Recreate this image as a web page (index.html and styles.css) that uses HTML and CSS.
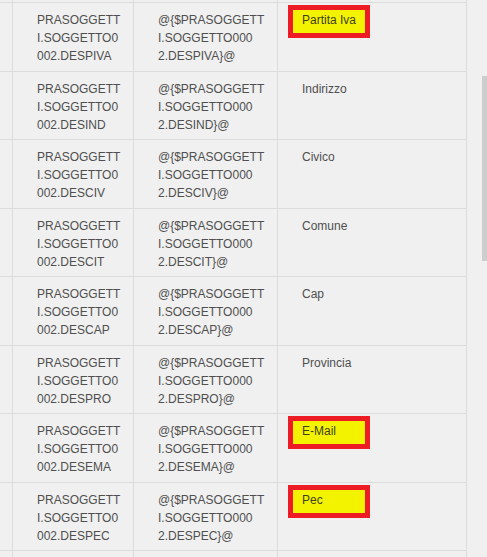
FILE: index.html
```html
<!DOCTYPE html>
<html lang="it">
<head>
  <meta charset="UTF-8">
  <meta name="viewport" content="width=device-width, initial-scale=1.0">
  <title>Campi Soggetto</title>
  <link rel="stylesheet" href="styles.css">
</head>
<body>
  <div class="grid">
    <div class="row row-cut-top">
      <div class="cell c1"></div>
      <div class="cell c2"></div>
      <div class="cell c3"></div>
      <div class="cell c4"></div>
    </div>

    <div class="row">
      <div class="cell c1"></div>
      <div class="cell c2">PRASOGGETT<br>I.SOGGETTO0<br>002.DESPIVA</div>
      <div class="cell c3">@{$PRASOGGETT<br>I.SOGGETTO000<br>2.DESPIVA}@</div>
      <div class="cell c4"><span class="label marked">Partita Iva</span></div>
    </div>

    <div class="row">
      <div class="cell c1"></div>
      <div class="cell c2">PRASOGGETT<br>I.SOGGETTO0<br>002.DESIND</div>
      <div class="cell c3">@{$PRASOGGETT<br>I.SOGGETTO000<br>2.DESIND}@</div>
      <div class="cell c4"><span class="label">Indirizzo</span></div>
    </div>

    <div class="row">
      <div class="cell c1"></div>
      <div class="cell c2">PRASOGGETT<br>I.SOGGETTO0<br>002.DESCIV</div>
      <div class="cell c3">@{$PRASOGGETT<br>I.SOGGETTO000<br>2.DESCIV}@</div>
      <div class="cell c4"><span class="label">Civico</span></div>
    </div>

    <div class="row">
      <div class="cell c1"></div>
      <div class="cell c2">PRASOGGETT<br>I.SOGGETTO0<br>002.DESCIT</div>
      <div class="cell c3">@{$PRASOGGETT<br>I.SOGGETTO000<br>2.DESCIT}@</div>
      <div class="cell c4"><span class="label">Comune</span></div>
    </div>

    <div class="row">
      <div class="cell c1"></div>
      <div class="cell c2">PRASOGGETT<br>I.SOGGETTO0<br>002.DESCAP</div>
      <div class="cell c3">@{$PRASOGGETT<br>I.SOGGETTO000<br>2.DESCAP}@</div>
      <div class="cell c4"><span class="label">Cap</span></div>
    </div>

    <div class="row">
      <div class="cell c1"></div>
      <div class="cell c2">PRASOGGETT<br>I.SOGGETTO0<br>002.DESPRO</div>
      <div class="cell c3">@{$PRASOGGETT<br>I.SOGGETTO000<br>2.DESPRO}@</div>
      <div class="cell c4"><span class="label">Provincia</span></div>
    </div>

    <div class="row">
      <div class="cell c1"></div>
      <div class="cell c2">PRASOGGETT<br>I.SOGGETTO0<br>002.DESEMA</div>
      <div class="cell c3">@{$PRASOGGETT<br>I.SOGGETTO000<br>2.DESEMA}@</div>
      <div class="cell c4"><span class="label marked">E-Mail</span></div>
    </div>

    <div class="row">
      <div class="cell c1"></div>
      <div class="cell c2">PRASOGGETT<br>I.SOGGETTO0<br>002.DESPEC</div>
      <div class="cell c3">@{$PRASOGGETT<br>I.SOGGETTO000<br>2.DESPEC}@</div>
      <div class="cell c4"><span class="label marked">Pec</span></div>
    </div>

    <div class="row row-cut-bottom">
      <div class="cell c1"></div>
      <div class="cell c2"></div>
      <div class="cell c3"></div>
      <div class="cell c4"></div>
    </div>
  </div>

  <div class="scroll-thumb"></div>
</body>
</html>
```

FILE: styles.css
```css
* {
  margin: 0;
  padding: 0;
  box-sizing: border-box;
}

html, body {
  height: 100%;
  overflow: hidden;
}

body {
  background-color: #f0f0f0;
  color: #4f4f4f;
  font-family: 'Liberation Sans', Arial, sans-serif;
  font-size: 12px;
  line-height: 18px;
}

.grid {
  width: 467px;
}

.row {
  display: grid;
  grid-template-columns: 13px 121px 144px 189px;
  height: 68.5px;
  border-bottom: 1px solid #dcdcdc;
}

.row-cut-top {
  height: 3px;
}

.row-cut-bottom {
  height: 10px;
  border-bottom: none;
}

.cell {
  border-right: 1px solid #dcdcdc;
  padding: 8px 4px 0 24px;
  white-space: nowrap;
  overflow: hidden;
}

.c1 {
  padding: 0;
}

.c4 {
  padding: 2px 0 0 10px;
}

.label {
  display: inline-block;
  width: 82px;
  padding: 1px 9px 4px;
  border: 5px solid transparent;
}

.label.marked {
  background-color: #f3f300;
  border-color: #ed1c24;
  color: #3f3f10;
}

.scroll-thumb {
  position: absolute;
  top: 76px;
  right: 0;
  width: 5px;
  height: 185px;
  background-color: #cdcdcd;
}
```
